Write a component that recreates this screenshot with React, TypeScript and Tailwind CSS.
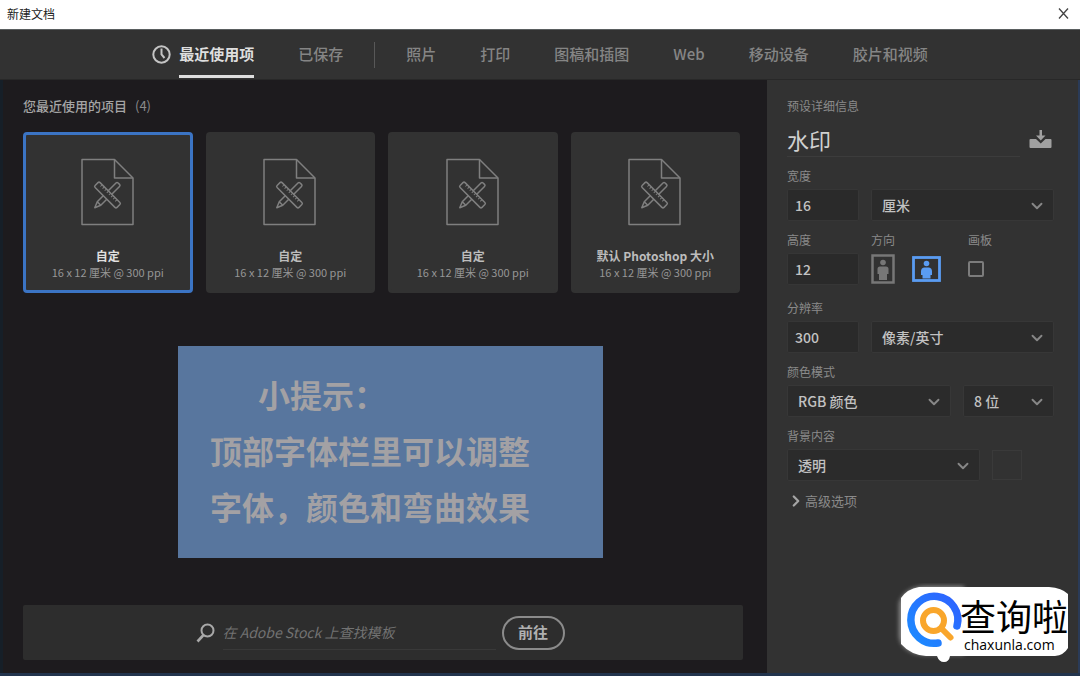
import React, { useState } from "react";
import { ChevronDown, ChevronRight } from "lucide-react";

const presets = [
  { name: "自定", size: "16 x 12 厘米 @ 300 ppi" },
  { name: "自定", size: "16 x 12 厘米 @ 300 ppi" },
  { name: "自定", size: "16 x 12 厘米 @ 300 ppi" },
  { name: "默认 Photoshop 大小", size: "16 x 12 厘米 @ 300 ppi" },
];

const categories = ["照片", "打印", "图稿和插图", "Web", "移动设备", "胶片和视频"];

function DocumentIcon() {
  return (
    <svg width="54" height="68" viewBox="0 0 54 68" fill="none" stroke="#7f7f7f" strokeWidth="1.5" strokeLinejoin="round">
      <path d="M1 1.5H33.5L52 20V66.5H1Z" />
      <path d="M33.5 1.5V20H52" />
      <g transform="translate(26.5 37) rotate(45)">
        <path d="M-2.500 -14.500Q-2.500 -16 -1 -16H1Q2.500 -16 2.500 -14.500V12L0 18L-2.500 12ZM-2.500 12H2.500" />
      </g>
      <g transform="translate(26.5 37) rotate(-45)">
        <rect x="-3.5" y="-15.5" width="7" height="31" rx="1.5" fill="#323232" />
        <path d="M3.500 -11H1M3.500 -8H1M3.500 -5H1M3.500 -2H1M3.500 1H1M3.500 4H1M3.500 7H1M3.500 10H1" strokeWidth="1" />
      </g>
    </svg>
  );
}

type CardProps = {
  name: string;
  size: string;
  selected: boolean;
  onClick: () => void;
};

function PresetCard({ name, size, selected, onClick }: CardProps) {
  return (
    <button
      type="button"
      onClick={onClick}
      aria-pressed={selected}
      className={`flex flex-col items-center rounded border-3 bg-[#323232] pt-[23px] pb-2.5 ${selected ? "border-[#3b74c4]" : "border-[#323232]"}`}
    >
      <DocumentIcon />
      <span className={`mt-[21px] text-xs leading-[17px] font-bold ${selected ? "text-[#e0e0e0]" : "text-[#bdbdbd]"}`}>{name}</span>
      <span className="text-[11px] leading-4 text-[#969696]">{size}</span>
    </button>
  );
}

type SelectProps = {
  label: string;
  id?: string;
  options: string[];
  className?: string;
};

function Select({ label, id, options, className }: SelectProps) {
  return (
    <div className={`relative ${className ?? ""}`}>
      <select id={id} aria-label={label} className="h-8 w-full appearance-none rounded-xs border border-[#373737] bg-[#2b2b2b] pl-2.5 text-sm leading-5 font-medium text-[#c2c2c2] outline-none">
        {options.map((o) => (
          <option key={o}>{o}</option>
        ))}
      </select>
      <ChevronDown size={18} strokeWidth={2.5} className="pointer-events-none absolute top-2 right-2 text-[#878787]" />
    </div>
  );
}

function NumberField({ id, label, value }: { id: string; label: string; value: string }) {
  return (
    <div className="flex w-[72px] shrink-0 flex-col gap-[5px]">
      <label htmlFor={id}>{label}</label>
      <input id={id} defaultValue={value} className="h-8 w-full rounded-xs border border-[#363636] bg-[#2a2a2a] px-[7px] text-sm leading-5 font-medium text-[#c2c2c2] outline-none" />
    </div>
  );
}

function SiteBadge() {
  return (
    <div className="absolute right-3 bottom-1.5 h-[84px] w-[174px]">
      <svg className="absolute inset-0" width="174" height="84" viewBox="0 0 174 84">
        <defs>
          <linearGradient id="ring" x1="0" y1="1" x2="1" y2="0">
            <stop offset="0" stopColor="#1c8cff" />
            <stop offset="1" stopColor="#2f62ff" />
          </linearGradient>
          <filter id="soft" x="-20%" y="-20%" width="140%" height="140%">
            <feGaussianBlur stdDeviation="2" />
          </filter>
        </defs>
        <path d="M5 20Q10 5 30 3H70V72H30Q8 70 5 54Z" fill="#8a8a8a" filter="url(#soft)" />
        <path d="M7 15Q13 6 25 4H155Q168 5 174 11V65Q170 72 161 73H56Q55 79 50 79Q45 79 43 73H32Q17 72 7 61Z" fill="#fff" />
        <path d="M44 60A23.500 23.500 0 1 1 63 43" fill="none" stroke="url(#ring)" strokeWidth="7.5" strokeLinecap="round" />
        <circle cx="39.5" cy="37.5" r="10.5" fill="none" stroke="#f9a62b" strokeWidth="6" />
        <path d="M48 46L56.500 54.500" stroke="#f9a62b" strokeWidth="6" strokeLinecap="round" />
      </svg>
      <div className="relative flex flex-col items-start pt-[10px] pl-[66px] text-black">
        <span className="text-4xl leading-[44px]">查询啦</span>
        <span className="pl-1 font-['Open_Sans',sans-serif] text-sm leading-4 font-medium">chaxunla.com</span>
      </div>
    </div>
  );
}

export default function App() {
  const [active, setActive] = useState(0);
  const [landscape, setLandscape] = useState(true);

  return (
    <div className="relative flex min-h-screen flex-col border-b-3 border-[#22344d] bg-[#1d1b1e] font-['Noto_Sans_CJK_SC',sans-serif]">
      {/* Title bar */}
      <header className="flex h-[29px] shrink-0 items-center justify-between bg-white pr-2.5 pb-0.5 pl-[7px]">
        <h1 className="text-xs text-[#222]">新建文档</h1>
        <button type="button" aria-label="关闭">
          <svg width="13" height="13" viewBox="0 0 13 13" stroke="#444" strokeWidth="1.3">
            <path d="M2 1.5L11 11.5M11 1.5L2 11.5" />
          </svg>
        </button>
      </header>

      {/* Categories */}
      <nav className="flex h-[51px] shrink-0 items-stretch justify-center border-t border-b border-t-[#5a5f60] border-b-[#282828] bg-[#323232] text-[15px] font-medium text-[#858585]">
        <div className="flex gap-11">
          <button type="button" className="flex items-stretch gap-2 text-[#dedede]">
            <svg className="self-center" width="19" height="19" viewBox="0 0 19 19" fill="none" stroke="#c4c4c4" strokeWidth="2">
              <circle cx="9.5" cy="9.5" r="8.2" />
              <path d="M9.5 3.5V9.5L12.5 13" />
            </svg>
            <span className="mb-px flex items-center border-b-3 border-[#dedede] pt-1 font-bold">最近使用项</span>
          </button>
          <button type="button">已保存</button>
        </div>
        <div className="mx-[31px] h-[26px] w-px self-center bg-[#585858]" />
        <div className="flex gap-11">
          {categories.map((c) => (
            <button type="button" key={c}>{c}</button>
          ))}
        </div>
      </nav>

      <div className="flex grow">
        {/* Recent items */}
        <main className="flex grow flex-col border-l-3 border-[#161f28] pr-6 pb-[13px] pl-5">
          <h2 className="pt-4 text-[13px] leading-5 font-medium text-[#a5a5a5]">
            您最近使用的项目<span className="ml-2 font-normal text-[#8a8a8a]">(4)</span>
          </h2>
          <div className="mt-4 mr-[3px] grid grid-cols-4 gap-[13px]">
            {presets.map((p, i) => (
              <PresetCard key={i} name={p.name} size={p.size} selected={i === active} onClick={() => setActive(i)} />
            ))}
          </div>

          <section className="mt-[53px] ml-[15px] w-[425px] self-center bg-[#58769e] px-8 pt-5 pb-6 text-[32px] leading-[56px] font-bold text-[#a3a1a4]">
            <p className="pl-12">小提示：</p>
            <p>顶部字体栏里可以调整</p>
            <p>字体，颜色和弯曲效果</p>
          </section>

          <form className="mt-auto flex h-[55px] items-center justify-center rounded-xs bg-[#2d2d2d] pr-1.5" onSubmit={(e) => e.preventDefault()}>
            <svg width="19" height="20" viewBox="0 0 19 20" fill="none" stroke="#a8a8a8" strokeWidth="2">
              <circle cx="11.5" cy="7.5" r="6" />
              <path d="M7.5 12L1.5 18.5" strokeWidth="2.6" />
            </svg>
            <input aria-label="查找模板" placeholder="在 Adobe Stock 上查找模板" className="ml-2 h-[34px] w-[273px] border-b border-[#393939] text-sm italic outline-none placeholder:text-[#727272]" />
            <button type="submit" className="ml-1.5 h-[34px] w-[63px] rounded-full border-2 border-[#8b8b8b] text-[15px] font-bold text-[#b0b0b0]">前往</button>
          </form>
        </main>

        {/* Preset details */}
        <aside className="w-[313px] shrink-0 border-r-2 border-[#2a3b58] bg-[#323232] pt-[18px] pr-6 pl-5 text-xs leading-4 text-[#8a8a8a]">
          <h2>预设详细信息</h2>
          <div className="mt-[7px] flex items-center justify-between">
            <input aria-label="名称" defaultValue="水印" className="h-9 w-[233px] border-b border-[#3c3c3c] text-[22px] text-[#d0d0d0] outline-none" />
            <button type="button" aria-label="存储预设" className="mr-0.5">
              <svg width="23" height="19" viewBox="0 0 23 19" fill="#a0a0a0">
                <path d="M10.5 0H13V5.500H16.500L11.750 10.500L7 5.500H10.500Z" />
                <path d="M1.500 9H7L11.750 13.500L16.500 9H21.500Q22.500 9 22.500 10V17Q22.500 18 21.500 18H1.500Q0.500 18 0.500 17V10Q0.500 9 1.500 9Z" />
              </svg>
            </button>
          </div>

          <div className="mt-[11px] flex items-end gap-3">
            <NumberField id="width" label="宽度" value="16" />
            <Select label="单位" options={["厘米", "毫米", "像素"]} className="grow" />
          </div>

          <div className="mt-[11px] flex gap-3">
            <NumberField id="height" label="高度" value="12" />
            <div className="w-[85px]">
              <span>方向</span>
              <div className="mt-[5px] flex h-8 items-center gap-[17px]">
                <button type="button" aria-label="纵向" aria-pressed={!landscape} onClick={() => setLandscape(false)} className={landscape ? "text-[#777]" : "text-[#5a9cf2]"}>
                  <svg width="24" height="30" viewBox="0 0 24 30" fill="currentColor">
                    <rect x="1.5" y="1.5" width="21" height="27" fill="none" stroke="currentColor" strokeWidth="2.5" />
                    <circle cx="12" cy="8.5" r="2.8" />
                    <path d="M9 12.500H15Q17.500 12.500 17.500 15V20H16V26H8V20H6.500V15Q6.500 12.500 9 12.500Z" />
                  </svg>
                </button>
                <button type="button" aria-label="横向" aria-pressed={landscape} onClick={() => setLandscape(true)} className={landscape ? "text-[#5a9cf2]" : "text-[#777]"}>
                  <svg width="29" height="26" viewBox="0 0 29 26" fill="currentColor">
                    <rect x="1.5" y="1.5" width="26" height="23" fill="none" stroke="currentColor" strokeWidth="2.8" />
                    <circle cx="14.5" cy="7.5" r="2.8" />
                    <path d="M12 11.500H17Q20 12 20 15.500V19H18.500V22.500H10.500V19H9V15.500Q9 12 12 11.500Z" />
                  </svg>
                </button>
              </div>
            </div>
            <div>
              <label htmlFor="artboard">画板</label>
              <div className="mt-[5px] flex h-8 items-center">
                <input id="artboard" type="checkbox" className="size-4 appearance-none rounded-xs border-2 border-[#7c7c7c] checked:bg-[#7c7c7c]" />
              </div>
            </div>
          </div>

          <div className="mt-[15px] flex items-end gap-3">
            <NumberField id="resolution" label="分辨率" value="300" />
            <Select label="分辨率单位" options={["像素/英寸", "像素/厘米"]} className="grow" />
          </div>

          <div className="mt-[11px] flex flex-col gap-[5px]">
            <label htmlFor="mode">颜色模式</label>
            <div className="flex gap-3">
              <Select label="颜色模式" id="mode" options={["RGB 颜色", "CMYK 颜色", "灰度"]} className="grow" />
              <Select label="位深度" options={["8 位", "16 位"]} className="w-[91px]" />
            </div>
          </div>

          <div className="mt-[11px] flex flex-col gap-[5px]">
            <label htmlFor="background">背景内容</label>
            <div className="flex items-center gap-3 pr-8">
              <Select label="背景内容" id="background" options={["透明", "白色", "黑色"]} className="grow" />
              <button type="button" aria-label="背景颜色" className="size-[30px] border border-[#3a3a3a]" />
            </div>
          </div>

          <button type="button" className="mt-2.5 flex items-center text-[13px] leading-5">
            <ChevronRight size={18} strokeWidth={3} className="text-[#a5a5a5]" />
            高级选项
          </button>
        </aside>
      </div>

      <SiteBadge />
    </div>
  );
}
